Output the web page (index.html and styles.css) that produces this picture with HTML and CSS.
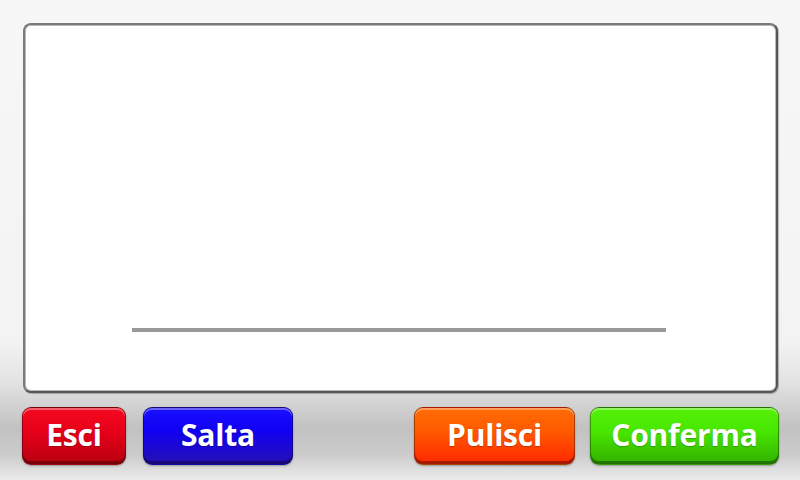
FILE: index.html
```html
<!DOCTYPE html>
<html lang="it">
<head>
<meta charset="utf-8">
<title>Firma</title>
<link rel="stylesheet" href="styles.css">
</head>
<body>
<div class="screen">
  <div class="pad">
    <div class="sign-line"></div>
  </div>
  <div class="actions">
    <button class="btn btn-red btn-esci">Esci</button>
    <button class="btn btn-blue btn-salta">Salta</button>
    <div class="spacer"></div>
    <button class="btn btn-orange btn-pulisci">Pulisci</button>
    <button class="btn btn-green btn-conferma">Conferma</button>
  </div>
</div>
</body>
</html>
```
FILE: styles.css
```css
html, body {
  margin: 0;
  padding: 0;
}
body {
  width: 800px;
  height: 480px;
  overflow: hidden;
  font-family: "Open Sans", "Liberation Sans", sans-serif;
  background: linear-gradient(to bottom, #f7f7f7 0px, #f3f3f3 340px, #e4e4e4 380px, #c2c2c2 428px, #cccccc 455px, #ebebeb 480px);
}
.screen {
  display: flex;
  flex-direction: column;
  padding: 23px 22px 0 23px;
  height: 480px;
  box-sizing: border-box;
}
.pad {
  height: 370px;
  box-sizing: border-box;
  background: #fff;
  border: 2px solid #7a7a7a;
  border-right-color: #555;
  border-bottom-color: #555;
  border-radius: 8px;
  box-shadow: 1px 1px 1px rgba(0,0,0,0.25), inset 0 0 0 1px #b8b8b8;
  display: flex;
  flex-direction: column;
  padding-top: 303px;
  padding-left: 107px;
}
.sign-line {
  width: 534px;
  height: 4px;
  background: #999;
}
.actions {
  display: flex;
  margin-top: 14px;
  margin-left: -1px;
  margin-right: -1px;
  height: 58px;
}
.spacer { flex: 1; }
.btn {
  height: 58px;
  box-sizing: border-box;
  border-radius: 9px;
  border: 1px solid rgba(0,0,0,0.35);
  color: #fff;
  font-family: "Open Sans", "Liberation Sans", sans-serif;
  font-weight: 700;
  font-size: 30px;
  letter-spacing: -0.2px;
  padding: 0 0 4px 0;
  box-shadow: inset 0 2px 0 rgba(255,255,255,0.35), inset 0 -3px 0 rgba(0,0,0,0.35), 0 1px 2px rgba(0,0,0,0.3);
  text-shadow: 0 1px 1px rgba(0,0,0,0.25);
}
.btn-esci { width: 104px; }
.btn-salta { width: 150px; margin-left: 17px; }
.btn-pulisci { width: 161px; }
.btn-conferma { width: 189px; margin-left: 15px; }
.btn-red { background: linear-gradient(to bottom, #f40a20 0%, #e8001a 40%, #b8000f 100%); }
.btn-blue { background: linear-gradient(to bottom, #1a10ff 0%, #1000f2 40%, #2610b4 100%); }
.btn-orange { background: linear-gradient(to bottom, #ff6c05 0%, #ff5a00 40%, #ff2800 100%); }
.btn-green { background: linear-gradient(to bottom, #55f008 0%, #48e800 40%, #33b000 100%); }
```
